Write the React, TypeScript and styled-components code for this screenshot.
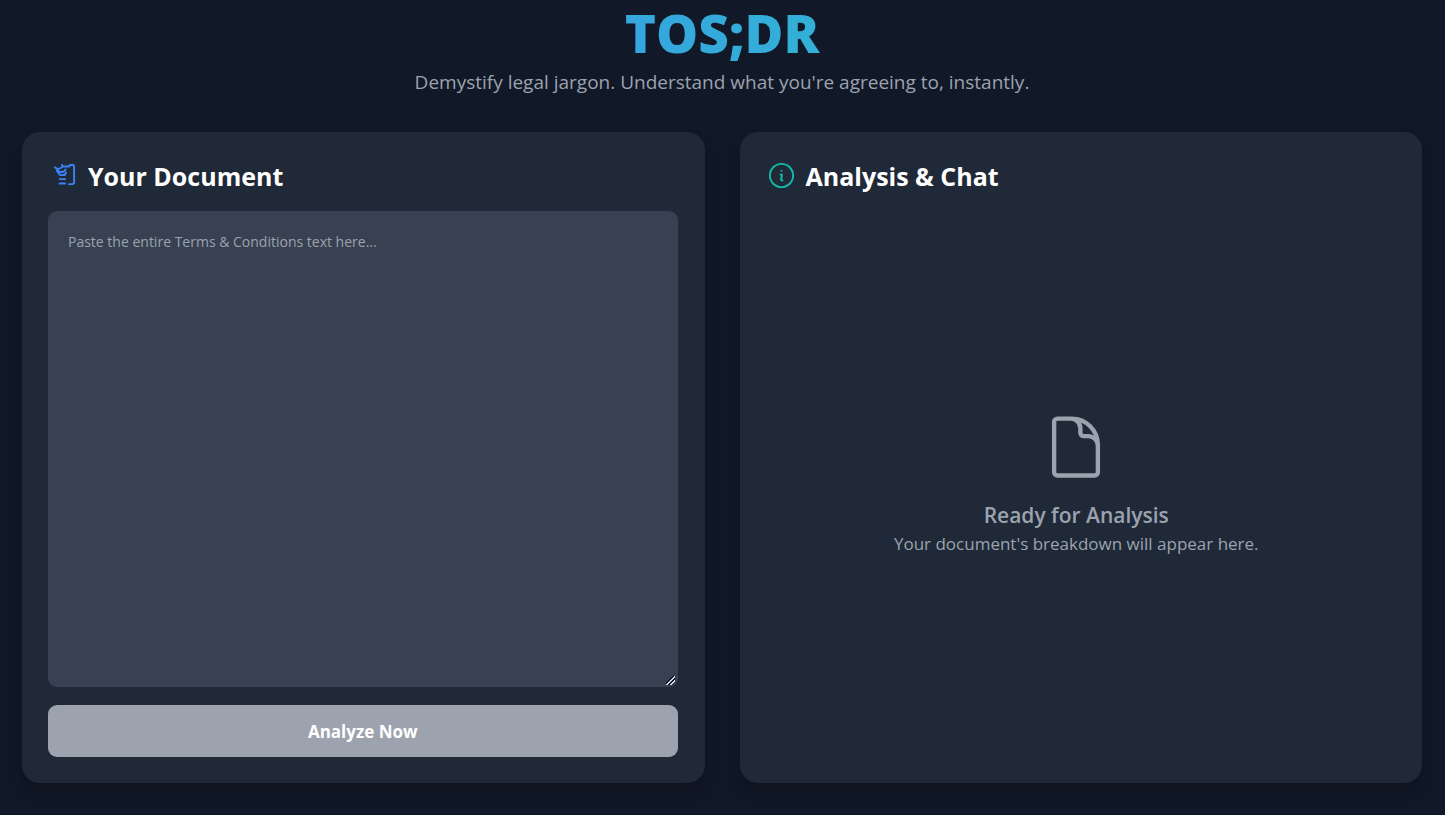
import React, { useState } from 'react';
import styled, { createGlobalStyle } from 'styled-components';

const GlobalStyle = createGlobalStyle`
  *, *::before, *::after { box-sizing: border-box; }
  body {
    margin: 0;
    background: #111827;
    color: #9ca3af;
    font-family: "Segoe UI", "Open Sans", "Noto Sans", sans-serif;
  }
  h1, h2, h3, p { margin: 0; }
`;

const Page = styled.div`
  display: flex;
  flex-direction: column;
  min-height: 100vh;
  padding: 0 23px 32px 22px;
`;

const Header = styled.header`
  text-align: center;
  margin-bottom: 32px;
`;

const Title = styled.h1`
  font-size: 53px;
  line-height: 65px;
  font-weight: 800;
  color: transparent;
  background: linear-gradient(90deg, #3b82f6, #2dd4bf);
  background-clip: text;
  -webkit-background-clip: text;
`;

const Subtitle = styled.p`
  font-size: 19px;
  line-height: 35px;
`;

const Columns = styled.main`
  flex: 1;
  display: grid;
  grid-template-columns: repeat(2, minmax(0, 1fr));
  gap: 35px;
`;

const Card = styled.section`
  display: flex;
  flex-direction: column;
  padding: 26px 27px 26px 26px;
  border-radius: 18px;
  background: #1f2937;
  box-shadow: 0 10px 16px rgba(0, 0, 0, 0.2);
`;

const CardTitle = styled.h2`
  display: flex;
  align-items: center;
  gap: 9px;
  height: 37px;
  margin-bottom: 16px;
  font-size: 25px;
  line-height: 37px;
  font-weight: 700;
  color: #ffffff;
`;

const TitleIcon = styled.svg<{ $color: string }>`
  width: 31px;
  height: 31px;
  flex: none;
  margin-bottom: 2px;
  color: ${({ $color }) => $color};
`;

const DocumentInput = styled.textarea`
  flex: 1;
  min-height: 320px;
  padding: 20px;
  border: 0;
  border-radius: 9px;
  background: #374151;
  color: #e5e7eb;
  font-family: inherit;
  font-size: 14px;
  line-height: 22px;
  resize: vertical;
  &::placeholder { color: #9ca3af; opacity: 1; }
  &::-webkit-resizer {
    background: linear-gradient(
        135deg,
        transparent 38%,
        #111827 38% 46%,
        #d1d5db 46% 60%,
        #111827 60% 72%,
        #d1d5db 72% 80%,
        transparent 80%
      )
      3px 4px / 9px 9px no-repeat;
  }
`;

const AnalyzeButton = styled.button`
  height: 52px;
  margin-top: 18px;
  border: 0;
  border-radius: 9px;
  background: #9ca3af;
  color: #ffffff;
  font-family: inherit;
  font-size: 17px;
  font-weight: 700;
`;

const EmptyState = styled.div`
  flex: 1;
  display: flex;
  flex-direction: column;
  align-items: center;
  justify-content: center;
  padding-right: 8px;
  text-align: center;
`;

const EmptyIcon = styled.svg`
  width: 70px;
  height: 70px;
  margin-bottom: 18px;
`;

const EmptyTitle = styled.h3`
  font-size: 21px;
  line-height: 30px;
  font-weight: 600;
`;

const EmptyText = styled.p`
  font-size: 17px;
  line-height: 27px;
`;

const stroke = {
  fill: 'none',
  stroke: 'currentColor',
  strokeWidth: 1.5,
  strokeLinecap: 'round' as const,
  strokeLinejoin: 'round' as const,
  viewBox: '0 0 24 24',
  'aria-hidden': true,
};

export default function App() {
  const [text, setText] = useState('');
  return (
    <>
      <GlobalStyle />
      <Page>
        <Header>
          <Title>TOS;DR</Title>
          <Subtitle>Demystify legal jargon. Understand what you're agreeing to, instantly.</Subtitle>
        </Header>
        <Columns>
          <Card>
            <CardTitle>
              <TitleIcon {...stroke} $color="#3b82f6">
                <path d="M5.2 5.6l2.2 1.5 1.2 2.2h2.2c1.3-.1 2.3-.7 2.8-2M10.9 3.7c.4.7.4 1.1 0 1.7-.6.8-1.8 1.3-3.2 1.5M10.9 5.1h5.4l.6-1.2h2.2c.7 0 1.1.4 1.1 1.1v12.3c0 .9-.5 1.4-1.4 1.4h-2.6" />
                <path d="M6.8 8.2l2.4 3.4h3.8l1-1.9M9 14.8h4.2M9 18.2h4.2" />
              </TitleIcon>
              <label htmlFor="document">Your Document</label>
            </CardTitle>
            <DocumentInput
              id="document"
              placeholder="Paste the entire Terms & Conditions text here..."
              value={text}
              onChange={(e) => setText(e.target.value)}
            />
            <AnalyzeButton type="button">Analyze Now</AnalyzeButton>
          </Card>
          <Card>
            <CardTitle>
              <TitleIcon {...stroke} $color="#14b8a6">
                <path d="M11.25 11.25l.041-.02a.75.75 0 011.063.852l-.708 2.836a.75.75 0 001.063.853l.041-.021M21 12a9 9 0 11-18 0 9 9 0 0118 0zm-9-3.75h.008v.008H12V8.25z" />
              </TitleIcon>
              Analysis &amp; Chat
            </CardTitle>
            <EmptyState>
              <EmptyIcon {...stroke}>
                <path d="M19.5 14.25v-2.625a3.375 3.375 0 00-3.375-3.375h-1.5A1.125 1.125 0 0113.5 7.125v-1.5a3.375 3.375 0 00-3.375-3.375H8.25m2.25 0H5.625c-.621 0-1.125.504-1.125 1.125v17.25c0 .621.504 1.125 1.125 1.125h12.75c.621 0 1.125-.504 1.125-1.125V11.25a9 9 0 00-9-9z" />
              </EmptyIcon>
              <EmptyTitle>Ready for Analysis</EmptyTitle>
              <EmptyText>Your document's breakdown will appear here.</EmptyText>
            </EmptyState>
          </Card>
        </Columns>
      </Page>
    </>
  );
}
